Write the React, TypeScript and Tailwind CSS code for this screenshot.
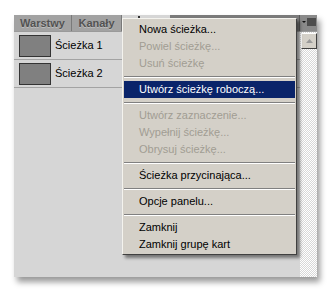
import React from "react";

type Item = { label: string; disabled?: boolean; active?: boolean } | "sep";

const items: Item[] = [
	{ label: "Nowa ścieżka..." },
	{ label: "Powiel ścieżkę...", disabled: true },
	{ label: "Usuń ścieżkę", disabled: true },
	"sep",
	{ label: "Utwórz ścieżkę roboczą...", active: true },
	"sep",
	{ label: "Utwórz zaznaczenie...", disabled: true },
	{ label: "Wypełnij ścieżkę...", disabled: true },
	{ label: "Obrysuj ścieżkę...", disabled: true },
	"sep",
	{ label: "Ścieżka przycinająca..." },
	"sep",
	{ label: "Opcje panelu..." },
	"sep",
	{ label: "Zamknij" },
	{ label: "Zamknij grupę kart" },
];

const paths = ["Ścieżka 1", "Ścieżka 2"];

export default function App() {
	return (
		<div className="relative w-[331px] h-[292px] bg-white overflow-hidden font-['Liberation_Sans',Arial,sans-serif]">
			{/* Panel */}
			<div className="absolute left-[14px] top-[15px] w-[303px] h-[262px] flex flex-col bg-[#d6d6d6] shadow-[3px_5px_6px_rgba(0,0,0,0.4)]">
				{/* Tab bar */}
				<div className="flex h-[17px] bg-[#7b7b7b] border-b border-[#9a9a9a]">
					<div className="w-[58px] flex items-center justify-center bg-[#a2a2a2] border-r border-[#7a7a7a] text-[11px] font-bold text-[#525252] [text-shadow:0_1px_0_#bdbdbd]">
						Warstwy
					</div>
					<div className="w-[50px] flex items-center justify-center bg-[#a2a2a2] border-r border-[#7a7a7a] text-[11px] font-bold text-[#525252] [text-shadow:0_1px_0_#bdbdbd]">
						Kanały
					</div>
					{/* active tab, hidden behind the menu */}
					<div className="w-[48px] bg-[#d6d6d6] pl-[16px] pt-[1px]">
						<div className="w-[2px] h-[2px] bg-[#333]" />
					</div>
					<div className="flex-1" />
					<div className="w-[18px] flex items-center justify-center bg-[#8a8a8a] border-l border-[#5a5a5a]">
						<svg width="14" height="10" viewBox="0 0 14 10">
							<path d="M0 3h4l-2 2z" fill="#111" />
							<path d="M5 1h9M5 3h9M5 5h9M5 7h9" stroke="#111" strokeWidth="1" />
						</svg>
					</div>
				</div>

				{/* Body */}
				<div className="flex flex-1">
					<div className="flex-1 flex flex-col">
						{paths.map(name => (
							<div
								key={name}
								className="h-[28px] flex items-center gap-[4px] pl-[5px] border-b border-[#a3a3a3]"
							>
								<div className="w-[32px] h-[22px] bg-[#808080] border border-[#333]" />
								<span className="text-[11px] text-black">{name}</span>
							</div>
						))}
					</div>
					<div className="w-[17px] flex flex-col bg-[repeating-conic-gradient(#d8d8d8_0_25%,#ffffff_0_50%)] bg-[length:2px_2px]">
						<div className="h-[16px] mt-[1px] ml-[1px] flex items-center justify-center bg-[#d4d0c8] border border-t-white border-l-white border-r-[#404040] border-b-[#404040]">
							<svg width="7" height="5" viewBox="0 0 7 5">
								<path d="M3.5 0L7 4H0z" fill="#9a9a9a" />
							</svg>
						</div>
					</div>
				</div>
			</div>

			{/* Context menu */}
			<div className="absolute left-[122px] top-[18px] w-[175px] pt-[2px] pb-[1px] bg-[#d4d0c8] border border-t-[#f4f3ee] border-l-[#f4f3ee] border-r-[#404040] border-b-[#404040] shadow-[3px_3px_3px_rgba(0,0,0,0.45)]">
				{items.map((item, i) =>
					item === "sep" ? (
						<div key={i} className="h-[9px] flex flex-col justify-center px-[1px]">
							<div className="h-px bg-[#808080]" />
							<div className="h-px bg-white" />
						</div>
					) : (
						<div
							key={i}
							className={`h-[17px] flex items-center pl-[15px] mx-[1px] text-[11px] whitespace-nowrap ${
								item.active
									? "bg-[#0a246a] text-white"
									: item.disabled
										? "text-[#a19d93]"
										: "text-black"
							}`}
						>
							{item.label}
						</div>
					),
				)}
			</div>
		</div>
	);
}
